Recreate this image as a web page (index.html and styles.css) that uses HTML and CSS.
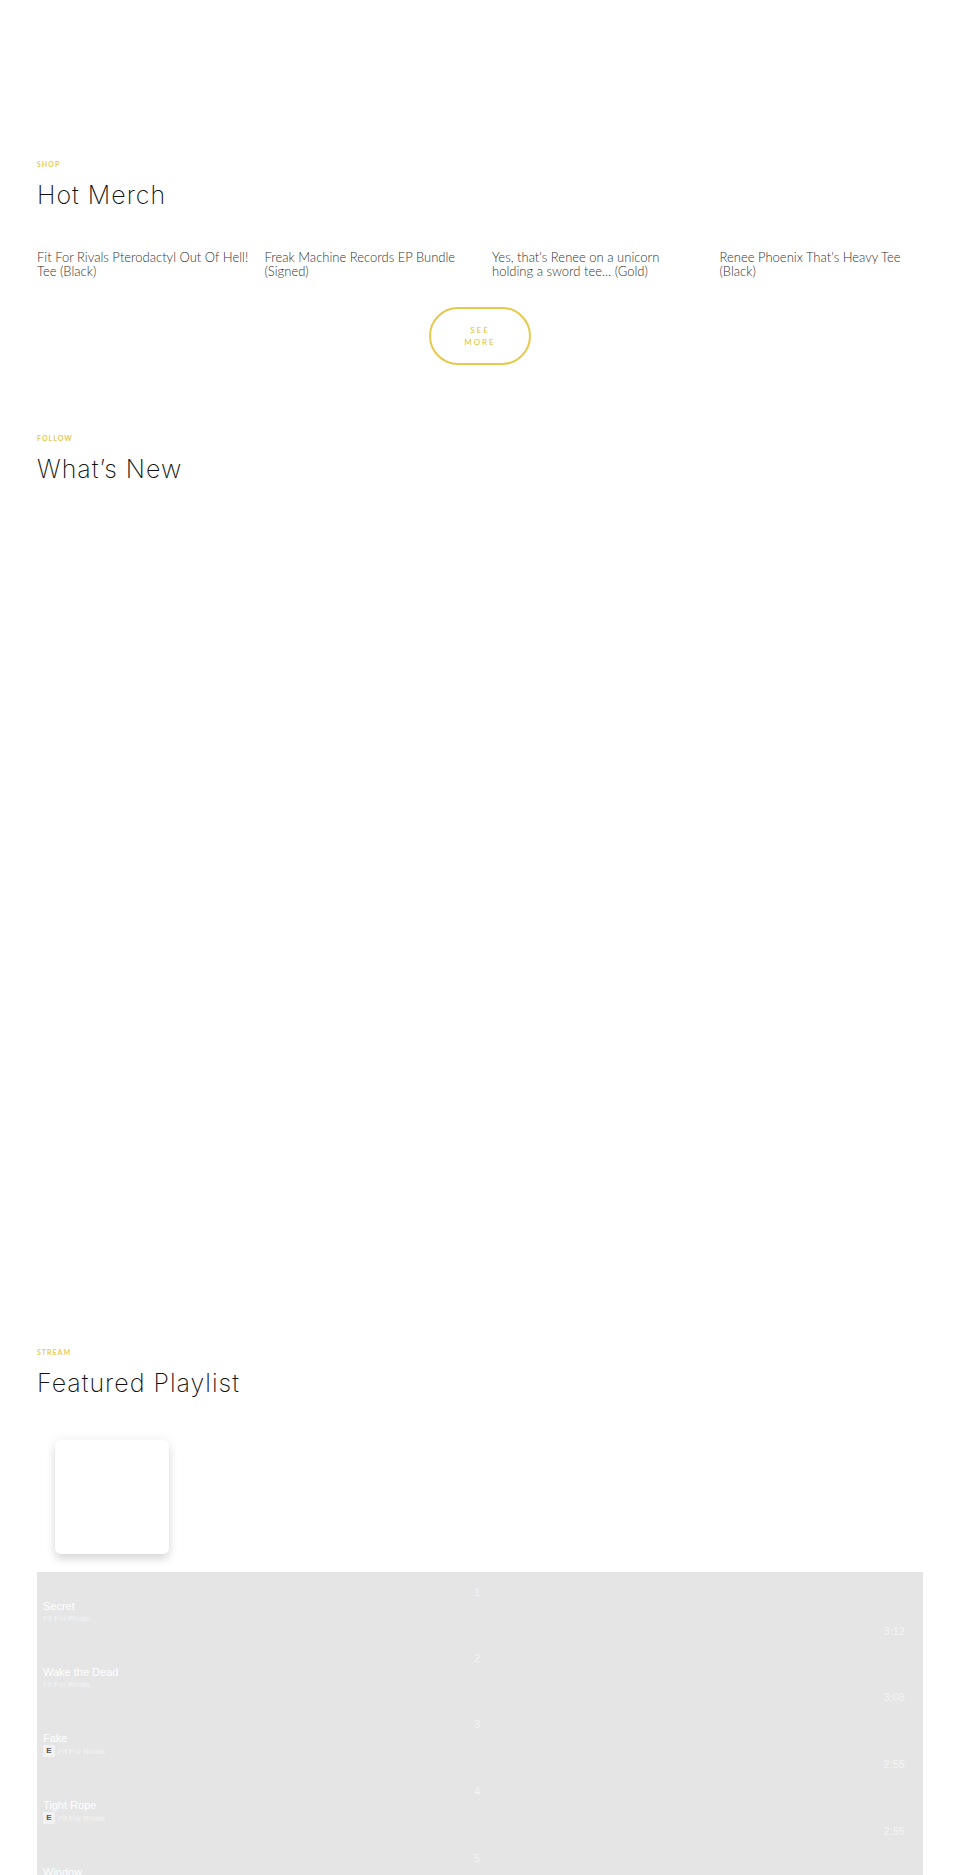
FILE: index.html
```html
<!DOCTYPE html>
<html lang="en">
<head>
<meta charset="utf-8">
<meta name="viewport" content="width=device-width, initial-scale=1">
<title>Fit For Rivals</title>
<link rel="stylesheet" href="styles.css">
</head>
<body>
<main class="page">
  <section class="section shop">
    <p class="eyebrow">Shop</p>
    <h2 class="heading">Hot Merch</h2>
    <div class="products">
      <a class="product" href="#">Fit For Rivals Pterodactyl Out Of Hell! Tee (Black)</a>
      <a class="product" href="#">Freak Machine Records EP Bundle (Signed)</a>
      <a class="product" href="#">Yes, that's Renee on a unicorn holding a sword tee... (Gold)</a>
      <a class="product" href="#">Renee Phoenix That's Heavy Tee (Black)</a>
    </div>
    <a class="more" href="#">See More</a>
  </section>
  <section class="section news">
    <p class="eyebrow">Follow</p>
    <h2 class="heading">What’s New</h2>
    <div class="feed"></div>
  </section>
  <section class="section stream">
    <p class="eyebrow">Stream</p>
    <h2 class="heading">Featured Playlist</h2>
    <div class="cover"></div>
    <ol class="tracks">
      <li class="track"><span class="number">1</span><span class="title">Secret</span><span class="artist">Fit For Rivals</span><span class="time">3:12</span></li>
      <li class="track"><span class="number">2</span><span class="title">Wake the Dead</span><span class="artist">Fit For Rivals</span><span class="time">3:08</span></li>
      <li class="track"><span class="number">3</span><span class="title">Fake</span><span class="artist"><b class="explicit">E</b>Fit For Rivals</span><span class="time">2:55</span></li>
      <li class="track"><span class="number">4</span><span class="title">Tight Rope</span><span class="artist"><b class="explicit">E</b>Fit For Rivals</span><span class="time">2:55</span></li>
      <li class="track"><span class="number">5</span><span class="title">Window</span></li>
    </ol>
  </section>
</main>
</body>
</html>
```
FILE: styles.css
```css
* {
  box-sizing: border-box;
}

body {
  margin: 0;
  background: #fff;
}

.page {
  height: 100vh;
  overflow: hidden;
  padding: 156px 37px 0;
}

.eyebrow {
  margin: 0;
  font: 700 7px/16px Lato, sans-serif;
  letter-spacing: 1px;
  text-transform: uppercase;
  color: #e8cb4e;
}

.heading {
  margin: 8px 0 0;
  font: 200 25px/30px Inter, sans-serif;
  letter-spacing: 1px;
  color: #111;
}

.products {
  display: grid;
  grid-template-columns: repeat(4, 1fr);
  gap: 24px;
  margin-top: 40px;
}

.product {
  margin-right: -8px;
  font: 300 13px/14px Lato, sans-serif;
  color: #333;
  text-decoration: none;
}

.more {
  display: block;
  width: 102px;
  margin: 29px auto 0;
  padding: 15px 24px;
  border: 2px solid #e6c94c;
  border-radius: 30px;
  font: 400 8px/12px Lato, sans-serif;
  letter-spacing: 2px;
  text-align: center;
  text-transform: uppercase;
  text-decoration: none;
  color: #e0bf35;
}

.news {
  margin-top: 65px;
}

.feed {
  height: 860px;
}

.cover {
  width: 114px;
  height: 114px;
  margin: 42px 0 18px 18px;
  border-radius: 6px;
  background: #fff;
  box-shadow: 0 6px 8px rgba(0, 0, 0, 0.12), 0 0 12px rgba(0, 0, 0, 0.06);
}

.tracks {
  margin: 0;
  padding: 14px 12px 14px 6px;
  list-style: none;
  background: #e5e5e5;
  font: 11px/14px "Liberation Sans", Arial, sans-serif;
  color: #fff;
}

.track {
  display: flex;
  flex-direction: column;
  padding-bottom: 14px;
}

.number {
  line-height: 13px;
  text-align: center;
  color: #f4f4f4;
}

.artist {
  display: flex;
  align-items: center;
  gap: 3px;
  font-size: 8px;
  line-height: 11px;
  color: #f4f4f4;
}

.explicit {
  width: 12px;
  border-radius: 1px;
  background: #f2f2f2;
  line-height: 12px;
  text-align: center;
  color: #555;
}

.time {
  padding-right: 6px;
  text-align: right;
  color: #f4f4f4;
}
```
